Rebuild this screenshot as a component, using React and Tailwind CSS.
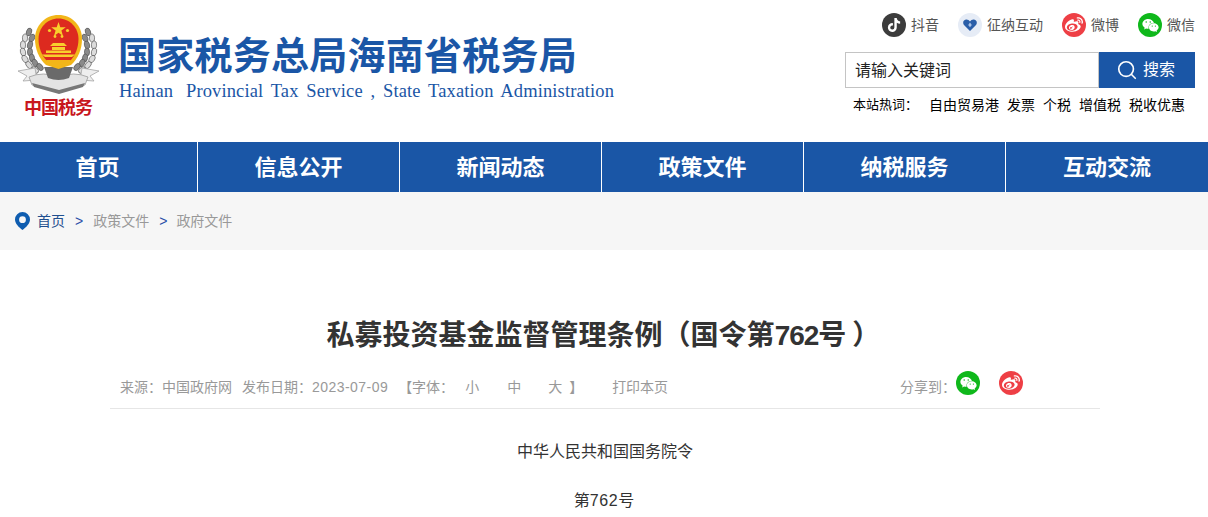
import { Search } from 'lucide-react';
import { FaTiktok, FaWeibo, FaWeixin } from 'react-icons/fa';

const NAV_ITEMS = ['信息公开', '新闻动态', '政策文件', '纳税服务', '互动交流'];
const HOT_WORDS = ['自由贸易港', '发票', '个税', '增值税', '税收优惠'];

// leaves of the left wreath branch, mirrored for the right one
const LEAVES = [
  [14, 17, 20], [10, 23, 5], [17, 23, 25], [8, 30, -5], [15, 30, 15], [8, 37, -15], [15, 37, 0],
  [10, 44, -30], [17, 43, -10], [14, 50, -40], [20, 48, -25], [20, 55, -50], [25, 52, -40],
];

function RoundIcon({ className, children }) {
  return (
    <span className={`flex h-6 w-6 shrink-0 items-center justify-center rounded-full ${className}`}>
      {children}
    </span>
  );
}

function WechatIcon() {
  return (
    <RoundIcon className="bg-[#0fb81b] text-white">
      <FaWeixin size={17} />
    </RoundIcon>
  );
}

function WeiboIcon() {
  return (
    <RoundIcon className="bg-[#ee3f45] text-white">
      <FaWeibo size={18} />
    </RoundIcon>
  );
}

function HeartIcon() {
  return (
    <RoundIcon className="bg-[#e6ecf6]">
      <svg width="14" height="12" viewBox="0 0 14 12">
        <path d="M7 12 1 6C-.5 4.300 0 1 3 .6 4.800.4 6 1.300 7 2.500 8 1.300 9.200.4 11 .6 14 1 14.500 4.300 13 6Z" fill="#2a5ea8" />
        <path d="M7 3.500 8.800 6 7 8.200 5.200 6Z" fill="#a9c2e6" />
      </svg>
    </RoundIcon>
  );
}

function Wreath() {
  return (
    <g>
      {LEAVES.map(([x, y, r], i) => (
        <ellipse
          key={i}
          cx={x}
          cy={y}
          rx="2.600"
          ry="4"
          transform={`rotate(${r} ${x} ${y})`}
          fill={i % 2 ? '#dcdcdc' : '#8a8a8a'}
          stroke="#4c4c4c"
          strokeWidth="0.6"
        />
      ))}
    </g>
  );
}

function Emblem() {
  return (
    <div className="flex w-[86px] shrink-0 flex-col items-center">
      <svg width="86" height="81" viewBox="0 0 86 81" className="shrink-0">
        <Wreath />
        <g transform="matrix(-1 0 0 1 87 0)">
          <Wreath />
        </g>
        {/* ribbon */}
        <path d="M3 56 20 53 22 65 8 66 12 61Z" fill="#eeeeee" stroke="#a5a5a5" strokeWidth="0.8" />
        <path d="M84 56 67 53 65 65 79 66 75 61Z" fill="#eeeeee" stroke="#a5a5a5" strokeWidth="0.8" />
        <path d="M14 62Q28 56 43.500 62 59 56 73 62L70 70 44 76 17 70Z" fill="#e4e4e4" stroke="#9a9a9a" strokeWidth="0.8" />
        <path d="M17 68 44 75 70 68 68 72 44 79 19 72Z" fill="#777" />
        <path d="M29 52H58L54 63Q43.500 67 33 63Z" fill="#6a6a6a" />
        {/* national emblem */}
        <path d="M43.500 0C30 0 20 10.500 20 24 20 34 24 44 31 50L43.500 54 56 50C63 44 67 34 67 24 67 10.500 57 0 43.500 0Z" fill="#f2b619" />
        <path d="M43.500 3.500C32 3.500 23.500 13 23.500 24 23.500 33 27 41 32 46H55C60 41 63.500 33 63.500 24 63.500 13 55 3.500 43.500 3.500Z" fill="#dd2a1f" />
        <path d="M43.500 7 45.300 12.300H50.800L46.400 15.600 48 21 43.500 17.700 39 21 40.600 15.600 36.200 12.300H41.700Z" fill="#f8cf2c" />
        <circle cx="34.500" cy="15.500" r="1.600" fill="#f8cf2c" />
        <circle cx="52.500" cy="15.500" r="1.600" fill="#f8cf2c" />
        <circle cx="40" cy="21.500" r="1.400" fill="#f8cf2c" />
        <circle cx="47" cy="21.500" r="1.400" fill="#f8cf2c" />
        <path d="M38 28H49L52 31H35ZM37 32H50V35H37ZM31 35.500H56V38H31Z" fill="#f8cf2c" />
        <path d="M27 39.500H60L57 42H30Z" fill="#f8cf2c" />
        <path d="M31 45H56L53 50Q43.500 54 34 50Z" fill="#f2b619" />
      </svg>
      <span className="mt-[-1px] text-[18px] leading-[22px] font-bold tracking-[-1px] text-[#c8161d] [font-family:'Noto_Sans_CJK_SC',sans-serif]">
        中国税务
      </span>
    </div>
  );
}

function PinIcon() {
  return (
    <svg width="15" height="18" viewBox="0 0 15 18" className="shrink-0">
      <path fillRule="evenodd" d="M7.500 0A7.500 7.500 0 0 1 15 7.500C15 11.500 11 15.500 7.500 18 4 15.500 0 11.500 0 7.500A7.500 7.500 0 0 1 7.500 0ZM7.500 4.300A3.400 3.400 0 1 0 7.500 11.100 3.400 3.400 0 0 0 7.500 4.300Z" fill="#0f5db0" />
    </svg>
  );
}

export default function App() {
  return (
    <div className="h-[517px] overflow-hidden bg-white text-[#333] [font-family:'Liberation_Sans','Noto_Sans_CJK_SC',sans-serif]">
      {/* HEADER */}
      <header className="flex h-[142px] items-start justify-between pr-[13px] pl-[15px]">
        <div className="flex pt-[15px]">
          <Emblem />
          <div className="ml-[17px] pt-[19px]">
            <h1 className="text-[38px] leading-[44px] font-bold tracking-[0.25px] whitespace-nowrap text-[#1a56a6]">
              国家税务总局海南省税务局
            </h1>
            <p className="mt-[1px] pl-[1px] text-[18.500px] leading-[24px] tracking-[0.13px] [word-spacing:3px] whitespace-nowrap text-[#1a56a6] [font-family:'Liberation_Serif',serif]">
              <span className="mr-[5px]">Hainan</span> Provincial Tax Service , State Taxation Administration
            </p>
          </div>
        </div>

        <div className="flex w-[350px] flex-col items-stretch pt-[13px]">
          <div className="flex items-center justify-end gap-[19px] text-sm leading-6 text-[#555]">
            <span className="flex items-center gap-[5px]">
              <RoundIcon className="bg-[#3c3c3c] text-white"><FaTiktok size={14} /></RoundIcon>抖音
            </span>
            <span className="flex items-center gap-[5px]"><HeartIcon />征纳互动</span>
            <span className="flex items-center gap-[5px]"><WeiboIcon />微博</span>
            <span className="flex items-center gap-[5px]"><WechatIcon />微信</span>
          </div>

          <div className="mt-[15px] flex h-9">
            <div className="flex flex-1 items-center border border-[#c4c4c4] pt-[2px] pl-[9px] text-base text-[#222]">
              请输入关键词
            </div>
            <div className="flex w-[96px] items-center gap-[5px] bg-[#1a56a6] pl-[17px] text-base text-white">
              <Search size={22} strokeWidth={1.8} />
              搜索
            </div>
          </div>

          <div className="mt-[7px] flex items-center pl-2 text-sm leading-5 whitespace-nowrap text-black">
            <span className="mr-[11px] w-[65px] text-[13px]">本站热词：</span>
            <div className="flex gap-2">
              {HOT_WORDS.map((word) => (
                <span key={word}>{word}</span>
              ))}
            </div>
          </div>
        </div>
      </header>

      {/* NAV */}
      <nav className="grid h-[50px] grid-cols-[198px_repeat(5,202px)] bg-[#1a56a6] text-[22px] font-bold text-white">
        <div className="flex items-center justify-center border-r border-white pr-[2px]">首页</div>
        {NAV_ITEMS.map((item, i) => (
          <div
            key={item}
            className={`flex items-center justify-center ${i < 4 ? 'border-r border-white' : ''}`}
          >
            {item}
          </div>
        ))}
      </nav>

      {/* BREADCRUMB */}
      <div className="flex h-[58px] items-center gap-[7px] bg-[#f6f6f6] pl-[15px] text-sm text-[#999]">
        <PinIcon />
        <span className="text-[#1f4f8f]">首页</span>
        <span className="mx-[3px] text-[#2a4fa8]">&gt;</span>
        <span>政策文件</span>
        <span className="mr-[2px] ml-[3px] text-[#2a4fa8]">&gt;</span>
        <span>政府文件</span>
      </div>

      {/* ARTICLE */}
      <main className="mx-[110px] w-[990px]">
        <h2 className="pt-[66px] pr-[3px] text-center text-[28px] leading-[40px] font-bold text-[#333]">
          私募投资基金监督管理条例（国令第<span className="tracking-[-1px]">762</span>号<span className="ml-[6px]">）</span>
        </h2>
        <div className="mt-[11px] flex h-[42px] items-start justify-between border-b border-[#e6e6e6] pr-[77px] pl-[10px] text-sm whitespace-nowrap text-[#999]">
          <div className="flex pt-[10px] leading-5">
            <span>来源：中国政府网</span>
            <span className="ml-[10px]">发布日期：<span className="tracking-[0.45px]">2023-07-09</span></span>
            <span className="ml-[10px]">【字体：</span>
            <span className="ml-[11px]">小</span>
            <span className="ml-[28px]">中</span>
            <span className="ml-[27px]">大</span>
            <span className="ml-[7px]">】</span>
            <span className="ml-[29px]">打印本页</span>
          </div>
          <div className="flex items-start pt-[4px]">
            <span className="pt-[6px] leading-5">分享到：</span>
            <WechatIcon />
            <span className="ml-[19px]"><WeiboIcon /></span>
          </div>
        </div>
        <div className="pt-[33px] text-center text-base leading-[20px] text-[#333]">
          <p>中华人民共和国国务院令</p>
          <p className="mt-[29px] pr-[2px]">第<span className="tracking-[0.6px]">762</span>号</p>
        </div>
      </main>
    </div>
  );
}
